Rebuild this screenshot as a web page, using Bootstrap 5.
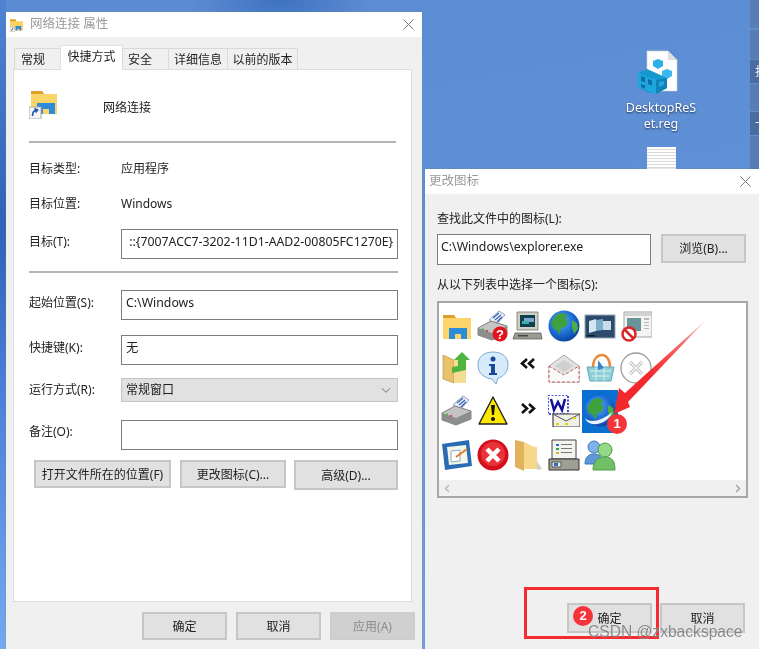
<!DOCTYPE html>
<html lang="zh-CN">
<head>
<meta charset="UTF-8">
<meta name="viewport" content="width=device-width, initial-scale=1.0">
<title>更改图标</title>
<link href="https://cdn.jsdelivr.net/npm/bootstrap@5.3.0/dist/css/bootstrap.min.css" rel="stylesheet">
<style>
  html, body { margin: 0; height: 100%; overflow: hidden; }
  body { font-family: "Noto Sans", "Noto Sans CJK SC", sans-serif; font-size: 12px; color: #222; }
  .desk { position: relative; width: 759px; height: 649px; overflow: hidden; filter: blur(.45px);
    background:
      radial-gradient(90px 40px at 280px 0, #3e73c0 0, rgba(62,115,192,0) 100%),
      linear-gradient(170deg, #5b8bd2 0, #6090d6 45%, #76a4ea 100%); }
  .edge-left { position: absolute; left: 0; top: 0; width: 6px; height: 649px;
    background: linear-gradient(180deg, #4f83d2 0, #2f62b8 35%, #4a80d8 60%, #74a9f0 100%); }
  .strip { position: absolute; left: 750px; width: 9px; background: #587cb3; color: #e8eef8; font-size: 12px; line-height: 24px; padding-left: 5px; overflow: hidden; white-space: nowrap; }
  .strip-dark { background: #4b6c9f; }

  .reg-icon { position: absolute; left: 637px; top: 50px; }
  .reg-name { position: absolute; left: 618px; top: 100px; width: 86px; text-align: center; color: #fff; font-size: 12.5px; line-height: 16px; text-shadow: 0 1px 2px #1c2f50; }
  .sheet-peek { position: absolute; left: 647px; top: 147px; width: 29px; height: 24px; background: repeating-linear-gradient(180deg, #fff 0 2px, #d9d9d9 2px 3px); }

  .win { position: absolute; background: #f0f0f0; box-shadow: 0 0 1px #777; }
  .win-a { left: 6px; top: 12px; width: 416px; height: 640px; }
  .win-b { left: 425px; top: 169px; width: 334px; height: 480px; }
  .win-title { height: 25px; background: #fff; color: #9a9a9a; font-size: 12.5px; padding-left: 4px; }
  .win-title svg.mini { margin-right: 6px; }
  .win-x { margin-left: auto; margin-right: 8px; }

  .nav-tabs.prop-tabs { margin: 11px 0 0 9px; border: 0; height: 21px; position: relative; z-index: 1; --bs-nav-tabs-border-width: 0; }
  .prop-tabs .nav-link { height: 21px; padding: 1px 0 0 0; border: 1px solid #d9d9d9; border-bottom: 0; border-radius: 0; background: #f0f0f0; color: #222; font-size: 12px; line-height: 20px; text-align: center; margin: 0 0 0 -1px; }
  .prop-tabs .nav-link.active { height: 25px; margin-top: -3px; padding-top: 0; background: #fff; color: #222; line-height: 22px; }
  .tab-a { width: 47px; text-align: left !important; padding-left: 6px !important; }
  .tab-b { width: 63px; }
  .tab-c { width: 47px; text-align: left !important; padding-left: 5px !important; }
  .tab-d { width: 60px; }
  .tab-e { width: 71px; }

  .prop-panel { margin-left: 7px; width: 399px; height: 533px; background: #fff; border: 1px solid #dcdcdc; padding: 20px 13px 0 15px; }
  .head-row { height: 28px; }
  .head-name { margin-left: 44px; margin-top: 8px; font-size: 12px; }
  .rule { height: 2px; background: #b4b4b4; }
  .rule-1 { margin-top: 23px; width: 367px; }
  .rule-2 { margin-top: 12px; width: 369px; }
  .info-row { height: 20px; margin-top: 15px; }
  .info-first { margin-top: 16px; }
  .lbl { width: 92px; flex: none; margin-bottom: 0; }
  .lbl-low { padding-bottom: 6px; }
  .form-control.win-input { width: 278px; height: 30px; padding: 0 4px 6px 4px; border: 1px solid #7d7d7d; border-radius: 0; font-size: 12.3px; color: #222; background: #fff; box-shadow: none; line-height: 18px; }
  .form-select.win-combo { --bs-form-select-bg-img: url("data:image/svg+xml,%3csvg xmlns='http://www.w3.org/2000/svg' viewBox='0 0 11 7'%3e%3cpath fill='none' stroke='%23666' stroke-width='1' d='M1 1l4.500 4.500L10 1'/%3e%3c/svg%3e"); width: 278px; height: 24px; padding: 0 4px; border: 1px solid #c4c4c4; border-radius: 0; background-color: #e1e1e1; color: #222; font-size: 12px; background-size: 10px 7px; background-position: right 6px center; }
  .mt-13 { margin-top: 13px; }
  .mt-15 { margin-top: 15px; }
  .mt-17 { margin-top: 17px; }
  .mt-18 { margin-top: 18px; }
  .mt-10 { margin-top: 10px; }

  .btn.win-btn { height: 28px; padding: 0; border: 2px solid #c6c6c6; border-radius: 0; background: #e1e1e1; color: #222; font-size: 12px; line-height: 23px; }
  .btn.win-btn:disabled { background: #d0d0d0; border-color: #cdcdcd; color: #8a8a8a; opacity: 1; }
  .w-85 { width: 85px; }
  .btn-open { width: 137px; margin-left: 5px; }
  .btn-change { width: 106px; margin-left: 9px; }
  .btn-adv { width: 104px; height: 30px !important; margin-left: 8px; }
  .foot-a { padding-right: 7px; gap: 9px; }

  .pick-body { padding: 0 13px 0 12px; height: 455px; }
  .pick-label { margin-top: 16px; line-height: 18px; }
  .pick-label-2 { margin-top: 11px; }
  .pick-file { margin-top: 6px; }
  .form-control.win-input.pick-input { width: 214px; height: 31px; padding-left: 3px; border-width: 1px; }
  .btn.win-btn.btn-browse { width: 85px; height: 29px; margin-left: 10px; }
  .pick-list { margin-top: 7px; width: 311px; height: 197px; background: #fff; border: 2px solid #a6a6a6; position: relative; }
  .icon-grid { display: grid; grid-template-columns: repeat(6, 35.8px); grid-template-rows: 42px 41px 46px 42px; padding-top: 2px; }
  .icon-cell { display: flex; align-items: center; justify-content: center; }
  .icon-cell.sel { background: #0a6fd0; height: 43px; align-self: center; }
  .hscroll { position: absolute; left: 0; right: 0; bottom: 0; height: 16px; background: #f0f0f0; color: #a6a6a6; padding: 0 5px; }
  .foot-b { margin-top: 105px; width: 179px; margin-left: 130px; gap: 8px; }
  .foot-b .btn.win-btn { height: 30px; }

  .red-box { position: absolute; left: 524px; top: 587px; width: 135px; height: 52px; border: 3px solid #f42b30; }
  .red-dot { position: absolute; width: 20px; height: 20px; border-radius: 50%; background: #f5333b; color: #fff; font-family: "Liberation Sans", sans-serif; font-weight: 700; font-size: 13px; }
  .dot-1 { left: 607px; top: 414px; }
  .dot-2 { left: 573px; top: 606px; }
  .red-arrow { position: absolute; left: 0; top: 0; pointer-events: none; }
  .mark-text { position: absolute; left: 588px; top: 623px; color: rgba(70,70,70,.62); font-family: "Liberation Sans", sans-serif; font-size: 15.6px; line-height: 18px; text-shadow: 0 0 1px rgba(255,255,255,.8); white-space: nowrap; }
</style>
</head>
<body>
<div class="desk">
  <div class="edge-left"></div>
  <div class="strip" style="top:0;height:28px"></div>
  <div class="strip" style="top:30px;height:29px"></div>
  <div class="strip strip-dark" style="top:60px;height:23px">打</div>
  <div class="strip" style="top:84px;height:27px"></div>
  <div class="strip strip-dark" style="top:112px;height:23px">一</div>
  <div class="strip" style="top:136px;height:33px"></div>

  <!-- desktop file -->
  <svg class="reg-icon" width="42" height="46" viewBox="0 0 42 46">
    <path d="M10 1h21l9 9v31H10z" fill="#fdfdfd" stroke="#d5d5d5" stroke-width=".6"/>
    <path d="M31 1v9h9z" fill="#dedede"/>
    <path d="M16 11l5-2 5 2v5l-5 3-5-3z" fill="#2cb0e8"/>
    <path d="M25 21l5-2 5 2v5l-5 3-5-3z" fill="#3bb8ee"/>
    <path d="M1 23l9-4 9 4 11 5v10l-11 6-9-2-9-5z" fill="#1597d0"/>
    <path d="M1 23l18 7v14L1 37z" fill="#1fa6de"/>
    <path d="M19 30l11-2v10l-11 6z" fill="#0f82b8"/>
    <path d="M4 26l4 1.500v5l-4-1.500zm7 3l4 1.500v5L11 34zM4 34l4 1.500v3L4 37z" fill="#0b6f9f"/>
    <path d="M22 32l5-1v4l-5 2z" fill="#26a7df"/>
  </svg>
  <div class="reg-name">DesktopReS<br>et.reg</div>
  <div class="sheet-peek"></div>

  <!-- properties window -->
  <div class="win win-a">
    <div class="win-title d-flex align-items-center">
      <svg class="mini" width="14" height="14" viewBox="0 0 15 14"><path d="M0 1h6l1 2h7v10H0z" fill="#fbd365"/><path d="M0 1h6l1 2H0z" fill="#dd9f24"/><path d="M6 8h6v5h-2v-2H8v2H6z" fill="#2a8ad8"/><path d="M0 9h5v5H0z" fill="#f3f3f3" stroke="#aaa" stroke-width=".5"/><path d="M1.500 13l2-3" stroke="#1d4f9c"/></svg>
      <span>网络连接 属性</span>
      <svg class="win-x" width="11" height="11" viewBox="0 0 11 11"><path d="M.5.5l10 10m0-10l-10 10" stroke="#777" fill="none"/></svg>
    </div>
    <ul class="nav nav-tabs prop-tabs">
      <li class="nav-item"><a class="nav-link tab-a" href="#">常规</a></li>
      <li class="nav-item"><a class="nav-link tab-b active" href="#">快捷方式</a></li>
      <li class="nav-item"><a class="nav-link tab-c" href="#">安全</a></li>
      <li class="nav-item"><a class="nav-link tab-d" href="#">详细信息</a></li>
      <li class="nav-item"><a class="nav-link tab-e" href="#">以前的版本</a></li>
    </ul>
    <div class="prop-panel">
      <div class="head-row d-flex align-items-center">
        <svg width="30" height="30" viewBox="0 0 30 30">
          <path d="M2 2h11l2 3h13v20H2z" fill="#fcd56a"/>
          <path d="M2 2h11l2 3H2z" fill="#dc9f27"/>
          <path d="M8 14h18v11h-6v-5h-6v5H8z" fill="#2c8cda"/>
          <rect x="0" y="18" width="12" height="12" fill="#f4f4f4" stroke="#a8a8a8"/>
          <path d="M3.500 27c0-4 1-5.500 4-6m-2-1.500l3 1.500-2 2.500" stroke="#1f55a5" stroke-width="1.700" fill="none"/>
        </svg>
        <span class="head-name">网络连接</span>
      </div>
      <div class="rule rule-1"></div>
      <div class="info-row info-first d-flex align-items-center"><span class="lbl">目标类型:</span><span>应用程序</span></div>
      <div class="info-row d-flex align-items-center"><span class="lbl">目标位置:</span><span>Windows</span></div>
      <div class="d-flex align-items-center mt-15"><label class="lbl pb-1">目标(T):</label><input class="form-control win-input" type="text" value=" ::{7007ACC7-3202-11D1-AAD2-00805FC1270E}"></div>
      <div class="rule rule-2"></div>
      <div class="d-flex align-items-center mt-17"><label class="lbl pb-1">起始位置(S):</label><input class="form-control win-input" type="text" value="C:\Windows"></div>
      <div class="d-flex align-items-center mt-15"><label class="lbl pb-1">快捷键(K):</label><input class="form-control win-input" type="text" value="无"></div>
      <div class="d-flex align-items-center mt-13"><label class="lbl">运行方式(R):</label><select class="form-select win-combo"><option>常规窗口</option></select></div>
      <div class="d-flex align-items-center mt-18"><label class="lbl lbl-low">备注(O):</label><input class="form-control win-input" type="text"></div>
      <div class="d-flex align-items-start mt-10">
        <button type="button" class="btn win-btn btn-open">打开文件所在的位置(F)</button>
        <button type="button" class="btn win-btn btn-change">更改图标(C)...</button>
        <button type="button" class="btn win-btn btn-adv">高级(D)...</button>
      </div>
    </div>
    <div class="d-flex justify-content-end foot-a mt-10">
      <button type="button" class="btn win-btn w-85">确定</button>
      <button type="button" class="btn win-btn w-85">取消</button>
      <button type="button" class="btn win-btn w-85" disabled>应用(A)</button>
    </div>
  </div>

  <!-- change icon window -->
  <div class="win win-b">
    <div class="win-title d-flex align-items-center">
      <span>更改图标</span>
      <svg class="win-x" width="11" height="11" viewBox="0 0 11 11"><path d="M.5.5l10 10m0-10l-10 10" stroke="#777" fill="none"/></svg>
    </div>
    <div class="pick-body">
      <div class="pick-label">查找此文件中的图标(L):</div>
      <div class="d-flex align-items-start pick-file">
        <input class="form-control win-input pick-input" type="text" value="C:\Windows\explorer.exe">
        <button type="button" class="btn win-btn btn-browse">浏览(B)...</button>
      </div>
      <div class="pick-label pick-label-2">从以下列表中选择一个图标(S):</div>
      <div class="pick-list">
        <div class="icon-grid">
          <div class="icon-cell"><svg width="32" height="32" viewBox="0 0 32 32"><path d="M2 5h11l2 3h15v21H2z" fill="#fcd56a"/><path d="M2 5h11l2 3H2z" fill="#dc9f27"/><path d="M8 18h18v11h-6v-5h-6v5H8z" fill="#2c8cda"/></svg></div>
          <div class="icon-cell"><svg width="32" height="32" viewBox="0 0 32 32"><use href="#printer"/><circle cx="23" cy="24" r="7.500" fill="#e2121c"/><text x="23" y="29" font-size="13" font-weight="700" fill="#fff" text-anchor="middle" font-family="Liberation Sans">?</text></svg></div>
          <div class="icon-cell"><svg width="32" height="32" viewBox="0 0 32 32"><path d="M5 2h21v18H5z" fill="#cfcfc4" stroke="#666" stroke-width=".7"/><path d="M8 5h15v12H8z" fill="#0d3f4f"/><path d="M12 8h10v4H12z" fill="#7fa6cf"/><path d="M10 11h7v3h-7z" fill="#37b0a8"/><path d="M3 23h26l1 6H1z" fill="#9b9b90" stroke="#555" stroke-width=".7"/><path d="M6 25h10v1.500H6z" fill="#444"/></svg></div>
          <div class="icon-cell"><svg width="32" height="32" viewBox="0 0 32 32"><use href="#globe"/></svg></div>
          <div class="icon-cell"><svg width="32" height="32" viewBox="0 0 32 32"><rect x="1" y="5" width="30" height="23" fill="#2c4a6c" stroke="#9aa7b5"/><path d="M5 11l7-2v12l-7 2z" fill="#d5e6ee"/><path d="M12 10l7-1v11l-7 1z" fill="#7eaec9"/><path d="M19 11h8v9h-8z" fill="#c7dce8"/><path d="M3 25h8v1.500H3z" fill="#0e1b2b"/></svg></div>
          <div class="icon-cell"><svg width="32" height="32" viewBox="0 0 32 32"><rect x="4" y="2" width="28" height="25" fill="#f4f4f2" stroke="#a4a4a4"/><path d="M5 3h26v3H5z" fill="#cfd3d6"/><path d="M7 8h14v13H7z" fill="#69939b"/><path d="M24 8h5v2h-5zm0 4h5v1h-5zm0 3h5v1h-5zm0 3h5v1h-5z" fill="#b9b9b9"/><circle cx="9" cy="24" r="6.500" fill="#fff" stroke="#d92626" stroke-width="2.500"/><path d="M5 20l8 8" stroke="#d92626" stroke-width="2.500"/></svg></div>

          <div class="icon-cell"><svg width="32" height="34" viewBox="0 0 32 34"><path d="M2 4l11 5v23l-11-4z" fill="#e9c36c" stroke="#b08f3d" stroke-width=".6"/><path d="M13 9h12v23H13z" fill="#f5dd92"/><path d="M11 16l6-1V9h-4l8-8 8 8h-4v10l-14 3z" fill="#4db53e"/></svg></div>
          <div class="icon-cell"><svg width="32" height="34" viewBox="0 0 32 34"><path d="M16 1c9 0 15 5 15 13 0 7-5 12-10 13l-2 6-4-5C7 27 1 22 1 14 1 6 7 1 16 1z" fill="#d8ebfb" stroke="#7ca8cf"/><circle cx="16" cy="8" r="2.500" fill="#174a9b"/><path d="M12 13h6v9h2v2h-8v-2h2v-7h-2z" fill="#174a9b"/></svg></div>
          <div class="icon-cell"><svg width="32" height="32" viewBox="0 0 32 32"><path d="M15 7l-5 4.500 5 4.500m7-9l-5 4.500 5 4.500" fill="none" stroke="#111" stroke-width="2.600"/></svg></div>
          <div class="icon-cell"><svg width="32" height="32" viewBox="0 0 32 32"><path d="M1 14L16 3l15 11v16H1z" fill="#e2e2e2" stroke="#aaa"/><path d="M1 14l15 9 15-9v16H1z" fill="#fafafa" stroke="#c95858" stroke-dasharray="3 2"/><path d="M7 14l9-6 9 6-9 6z" fill="#cfcfcf"/></svg></div>
          <div class="icon-cell"><svg width="32" height="32" viewBox="0 0 32 32"><path d="M9 16C9 6 14 3 18 3s8 4 8 12" fill="none" stroke="#e98a3a" stroke-width="2.500"/><path d="M3 15h27l-3 14H6z" fill="#8ecfd8" stroke="#63a6b4"/><path d="M6 19h21M8 24h17M12 15v14m8-14v14" stroke="#d5eef2"/><path d="M14 8l6 8-6 2z" fill="#3a83d0"/></svg></div>
          <div class="icon-cell"><svg width="32" height="32" viewBox="0 0 32 32"><circle cx="16" cy="16" r="15" fill="#fff" stroke="#9c9c9c" stroke-width="1.300"/><path d="M10 10l12 12m0-12L10 22" stroke="#c4c4c4" stroke-width="3.500"/><path d="M10 10l12 12m0-12L10 22" stroke="#f2f2f2" stroke-width="1.500"/></svg></div>

          <div class="icon-cell"><svg width="32" height="32" viewBox="0 0 32 32"><use href="#printer"/></svg></div>
          <div class="icon-cell"><svg width="32" height="32" viewBox="0 0 32 32"><path d="M16 2l14 27H2z" fill="#ffe800" stroke="#222" stroke-width="1.400" stroke-linejoin="round"/><path d="M14 10h4l-1 10h-2z" fill="#111"/><circle cx="16" cy="24" r="2" fill="#111"/></svg></div>
          <div class="icon-cell"><svg width="32" height="32" viewBox="0 0 32 32"><path d="M10 9l5 4.500-5 4.500m7-9l5 4.500-5 4.500" fill="none" stroke="#111" stroke-width="2.600"/></svg></div>
          <div class="icon-cell"><svg width="32" height="32" viewBox="0 0 32 32"><path d="M0 0h20v19H0z" fill="#fff" stroke="#1a1ad8" stroke-width="1.600" stroke-dasharray="2 1.500"/><path d="M3 4l3 11 4-8 4 8 3-11" fill="none" stroke="#10109c" stroke-width="2.500"/><path d="M5 19h27v13H5z" fill="#efefe6" stroke="#444" stroke-width="1.200"/><path d="M5 19l13 7 14-7" fill="none" stroke="#555"/><path d="M8 29h3m6 0h3m5-6h3" stroke="#e7d500" stroke-width="2"/></svg></div>
          <div class="icon-cell sel"><svg width="32" height="32" viewBox="0 0 32 32"><use href="#globe"/><path d="M1 23c4 5 16 4 27-6-2 8-11 13-20 12-4-1-6-3-7-6z" fill="#e6f3ff"/></svg></div>
          <div class="icon-cell"></div>

          <div class="icon-cell"><svg width="32" height="32" viewBox="0 0 32 32"><path d="M1 5l27-4 3 26-27 4z" fill="#2a6bb5"/><path d="M6 8l19-2 2 18-19 2z" fill="#f2f6e8"/><path d="M10 12l9-1v11l-9 1z" fill="#fff" stroke="#8da7c8"/><path d="M15 18l11-8" stroke="#e07c2b" stroke-width="2"/></svg></div>
          <div class="icon-cell"><svg width="32" height="32" viewBox="0 0 32 32"><circle cx="16" cy="16" r="15.500" fill="#d3101c"/><circle cx="16" cy="15" r="12" fill="#e8333a"/><path d="M10 10l12 12m0-12L10 22" stroke="#fff" stroke-width="4.500"/></svg></div>
          <div class="icon-cell"><svg width="32" height="32" viewBox="0 0 32 32"><path d="M3 1l9 2v29l-9-4z" fill="#e2b35c"/><path d="M12 3l10 5h3v22H12z" fill="#f5d88a"/><path d="M25 22l5 8-5 1z" fill="#cfcfcf"/></svg></div>
          <div class="icon-cell"><svg width="32" height="32" viewBox="0 0 32 32"><path d="M4 1h24v19H4z" fill="#f3f3f0" stroke="#444"/><path d="M8 5h3v2H8z" fill="#2a6bc0"/><path d="M8 9h3v2H8z" fill="#2aa050"/><path d="M8 13h3v2H8z" fill="#d9b42a"/><path d="M13 5h11v1H13zm0 4h11v1H13zm0 4h11v1H13z" fill="#777"/><path d="M1 20h30v11H1z" fill="#9f9f96" stroke="#333"/><path d="M4 23h9v5H4z" fill="#e9e9e9" stroke="#555"/><path d="M6 24h4v3H6z" fill="#2a6bc0"/></svg></div>
          <div class="icon-cell"><svg width="32" height="32" viewBox="0 0 32 32"><circle cx="10" cy="8" r="6" fill="#7fb2e8" stroke="#3f76b8"/><path d="M1 25c0-7 4-10 9-10s9 3 9 10z" fill="#5e97da" stroke="#3f76b8"/><circle cx="21" cy="11" r="7" fill="#95d887" stroke="#4c9e45"/><path d="M9 31c0-9 5-13 12-13s10 4 10 13z" fill="#71bf66" stroke="#4c9e45"/></svg></div>
        </div>
        <div class="hscroll d-flex align-items-center justify-content-between">
          <svg width="6" height="9" viewBox="0 0 6 9"><path d="M5 1L1.500 4.500 5 8" fill="none" stroke="#b8b8b8" stroke-width="1.500"/></svg>
          <svg width="6" height="9" viewBox="0 0 6 9"><path d="M1 1l3.500 3.500L1 8" fill="none" stroke="#a6a6a6" stroke-width="1.500"/></svg>
        </div>
      </div>
      <div class="d-flex foot-b">
        <button type="button" class="btn win-btn w-85">确定</button>
        <button type="button" class="btn win-btn w-85">取消</button>
      </div>
    </div>
  </div>

  <!-- annotations -->
  <svg class="red-arrow" width="759" height="649" viewBox="0 0 759 649">
    <defs>
      <linearGradient id="arrowFill" x1="706" y1="320" x2="614" y2="414" gradientUnits="userSpaceOnUse">
        <stop offset="0" stop-color="#ffd5d5"/><stop offset=".25" stop-color="#f86a6a"/><stop offset=".6" stop-color="#f3282d"/><stop offset="1" stop-color="#f3282d"/>
      </linearGradient>
      <symbol id="printer" viewBox="0 0 32 32">
        <path d="M12 10L22 1l6 4-9 10z" fill="#e8eef8" stroke="#6b7fa3" stroke-width=".7"/>
        <path d="M16 8l6-5m-4 7l6-5m-4 7l5-5" stroke="#3461b5" stroke-width="1.200"/>
        <path d="M1 18l13-7 16 5v8l-15 6-14-5z" fill="#c4c4c4" stroke="#555" stroke-width=".7"/>
        <path d="M1 18l14 5 15-7v8l-15 6-14-5z" fill="#8d8d8d"/>
        <path d="M5 19l2 .8" stroke="#3dbb3d" stroke-width="1.500"/><path d="M9 20.500l2 .8" stroke="#d13a3a" stroke-width="1.500"/>
      </symbol>
      <radialGradient id="globeFill" cx=".4" cy=".35" r=".7">
        <stop offset="0" stop-color="#5eb0f2"/><stop offset=".6" stop-color="#1a6ad0"/><stop offset="1" stop-color="#0d3f9c"/>
      </radialGradient>
      <symbol id="globe" viewBox="0 0 32 32">
        <circle cx="16" cy="16" r="15.500" fill="url(#globeFill)"/>
        <path d="M8 5c3-2 8-2 11 0l-2 4 3 3-3 5-4 1-1 7-3-5-3-1-3-6z" fill="#3fa13c"/>
        <path d="M24 10l5 3 1 6-4 5-2-7z" fill="#4cae44"/>
      </symbol>
    </defs>
    <path d="M706 320L628 402l2 5-16 7 5-26 6 5z" fill="url(#arrowFill)"/>
  </svg>
  <div class="red-box"></div>
  <div class="red-dot dot-1 d-flex align-items-center justify-content-center">1</div>
  <div class="red-dot dot-2 d-flex align-items-center justify-content-center">2</div>
  <div class="mark-text">CSDN @zxbackspace</div>
</div>
<script src="https://cdn.jsdelivr.net/npm/bootstrap@5.3.0/dist/js/bootstrap.bundle.min.js"></script>
</body>
</html>
